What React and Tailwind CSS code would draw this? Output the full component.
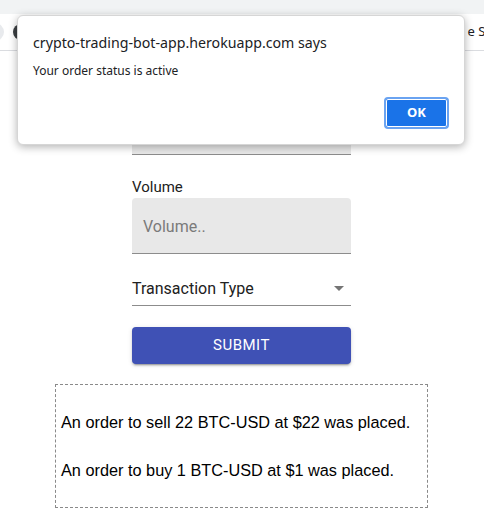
export default function App() {
  return (
    <div className="relative w-[484px] h-[527px] overflow-hidden bg-white" style={{ fontFamily: "Roboto, 'Noto Sans', sans-serif" }}>
      {/* browser chrome */}
      <div className="h-[14px] bg-[#f1f3f4]" />
      <div className="h-[37px] border-b border-[#dadce0] bg-white flex items-center ml-[-14px]">
        <div className="w-[18px] h-[18px] rounded-full bg-[#e8eaed]" />
        <div className="ml-[9px] w-[16px] h-[16px] rounded-full bg-[#3c4043]" />
        <div className="ml-auto mr-[-8px] whitespace-nowrap text-[13px] text-[#202124]" style={{ fontFamily: "'Noto Sans', sans-serif" }}>e Sy</div>
      </div>

      {/* form */}
      <div className="ml-[132px] w-[219px] pt-[27px] flex flex-col">
        <div className="flex flex-col gap-[1px]">
          <div className="h-[20px] text-[15px] leading-[20px] text-[#212121]">Price</div>
          <div className="h-[56px] rounded-t-[4px] bg-[#e8e8e8] border-b border-[#8c8c8c]" />
        </div>

        <div className="mt-[22px] flex flex-col gap-[1px]">
          <div className="h-[20px] text-[15px] leading-[20px] text-[#212121]">Volume</div>
          <div className="h-[56px] rounded-t-[4px] bg-[#e8e8e8] border-b border-[#8c8c8c] flex items-center pl-[11px] pt-[2px]">
            <span className="text-[16px] text-[#7a7a7a]">Volume..</span>
          </div>
        </div>

        <div className="mt-[25px] flex items-center justify-between border-b border-[#8c8c8c] pb-[7px] pr-[7px]">
          <div className="text-[16px] leading-[19px] text-[#212121]">Transaction Type</div>
          <div className="w-0 h-0 border-l-[5px] border-r-[5px] border-t-[5px] border-l-transparent border-r-transparent border-t-[#757575]" />
        </div>

        <button className="mt-[21px] w-full h-[37px] rounded-[4px] bg-[#3f51b5] text-white text-[15px] font-normal tracking-[0.5px] shadow-[0_3px_1px_-2px_rgba(0,0,0,0.2),0_2px_2px_0_rgba(0,0,0,0.14),0_1px_5px_0_rgba(0,0,0,0.12)] flex items-center justify-center">
          SUBMIT
        </button>
      </div>

      <div className="mt-[20px] ml-[55px] w-[373px] border border-dashed border-[#8a8a8a] pl-[5px] pt-[28px] pb-[28px] flex flex-col gap-[30px] text-[16.3px] leading-[18px] text-black" style={{ fontFamily: "'Liberation Sans', Arial, sans-serif" }}>
        <p>An order to sell 22 BTC-USD at $22 was placed.</p>
        <p>An order to buy 1 BTC-USD at $1 was placed.</p>
      </div>

      {/* alert dialog (overlay) */}
      <div className="absolute left-[17px] top-[15px] w-[448px] h-[130px] rounded-[6px] bg-white border border-[#d6d6d6] shadow-[0_2px_8px_rgba(0,0,0,0.3)] flex flex-col pt-[17px] px-[15px]" style={{ fontFamily: "'Noto Sans', sans-serif" }}>
        <div className="text-[14.2px] leading-[20px] text-[#202124] whitespace-nowrap">crypto-trading-bot-app.herokuapp.com says</div>
        <div className="mt-[9px] text-[12px] leading-[18px] text-[#202124]">Your order status is active</div>
        <div className="mt-[17px] flex justify-end">
          <button className="w-[65px] h-[32px] rounded-[4px] bg-[#1a73e8] border-2 border-[#6aa3f1] ring-1 ring-inset ring-white text-white text-[13px] font-bold flex items-center justify-center">
            OK
          </button>
        </div>
      </div>
    </div>
  );
}
